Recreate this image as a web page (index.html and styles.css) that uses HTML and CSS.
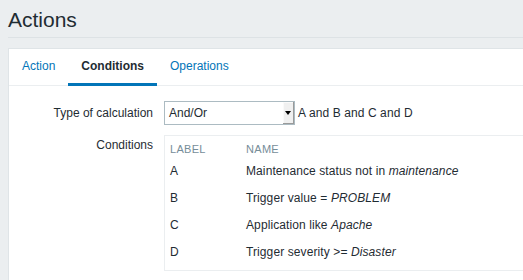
FILE: index.html
```html
<!DOCTYPE html>
<html>
<head>
<meta charset="utf-8">
<link rel="stylesheet" href="styles.css">
</head>
<body>
<header class="page-header">
  <h1 class="title">Actions</h1>
</header>
<main class="panel">
  <ul class="tabs">
    <li class="tab"><a href="#">Action</a></li>
    <li class="tab active"><a href="#">Conditions</a></li>
    <li class="tab"><a href="#">Operations</a></li>
  </ul>
  <div class="form">
    <div class="row">
      <label class="label label-calc">Type of calculation</label>
      <div class="field field-calc">
        <div class="select">
          <span class="select-text">And/Or</span>
          <span class="select-btn"><span class="caret"></span></span>
        </div>
        <span class="formula">A and B and C and D</span>
      </div>
    </div>
    <div class="row">
      <label class="label label-cond">Conditions</label>
      <div class="field field-cond">
        <div class="cond-box">
          <div class="cond-head">
            <span class="col-label">Label</span>
            <span class="col-name">Name</span>
          </div>
          <div class="cond-row"><span class="col-label">A</span><span class="col-name">Maintenance status not in <em>maintenance</em></span></div>
          <div class="cond-row"><span class="col-label">B</span><span class="col-name">Trigger value = <em>PROBLEM</em></span></div>
          <div class="cond-row"><span class="col-label">C</span><span class="col-name">Application like <em>Apache</em></span></div>
          <div class="cond-row"><span class="col-label">D</span><span class="col-name">Trigger severity &gt;= <em>Disaster</em></span></div>
        </div>
      </div>
    </div>
  </div>
</main>
</body>
</html>
```

FILE: styles.css
```css
html, body {
  margin: 0;
  padding: 0;
}
body {
  background: #ebeef0;
  font-family: "Liberation Sans", Arial, sans-serif;
  font-size: 12px;
  color: #1f2c33;
  overflow: hidden;
  height: 280px;
  display: flex;
  flex-direction: column;
}
.page-header {
  margin: 0 0 0 8px;
  padding: 8px 0 5px 0;
  border-bottom: 1px solid #dde2e5;
}
.title {
  margin: 0;
  font-size: 21px;
  font-weight: normal;
  line-height: 24px;
  color: #1f2c33;
}
.panel {
  flex: 1;
  margin: 10px 0 0 8px;
  background: #fff;
  border: 1px solid #dfe4e7;
  border-right: none;
  border-bottom: none;
}
.tabs {
  list-style: none;
  margin: 0;
  padding: 0;
  display: flex;
  border-bottom: 1px solid #ebeef0;
}
.tab {
  height: 34px;
  line-height: 34px;
  padding: 0 13px;
  border-bottom: 3px solid transparent;
  margin-bottom: -1px;
}
.tab a {
  color: #0275b8;
  text-decoration: none;
}
.tab.active {
  border-bottom-color: #0275b8;
}
.tab.active a {
  color: #1f2c33;
  font-weight: bold;
}
.form {
  padding-top: 15px;
  display: flex;
  flex-direction: column;
  gap: 10px;
}
.row {
  display: flex;
  gap: 11px;
}
.label {
  width: 144px;
  text-align: right;
  flex: none;
}
.label-calc {
  line-height: 24px;
}
.label-cond {
  line-height: 14px;
  padding-top: 3px;
}
.field-calc {
  display: flex;
  align-items: center;
  gap: 3px;
}
.field-cond {
  flex: 1;
}
.select {
  box-sizing: border-box;
  width: 131px;
  height: 24px;
  border: 1px solid #acbbc2;
  background: #fff;
  display: flex;
}
.select-text {
  flex: 1;
  line-height: 22px;
  padding-left: 4px;
}
.select-btn {
  width: 11px;
  background: #f0f0f0;
  box-shadow: inset -1px -1px 0 #9a9a9a, inset 1px 1px 0 #fafafa;
  display: flex;
  align-items: center;
  justify-content: center;
}
.caret {
  width: 0;
  height: 0;
  border-left: 3px solid transparent;
  border-right: 3px solid transparent;
  border-top: 4px solid #000;
  margin-right: 1px;
}
.formula {
  line-height: 24px;
  letter-spacing: 0.1px;
}
.cond-box {
  box-sizing: border-box;
  border: 1px solid #ebeef0;
  border-right: none;
  padding: 0 0 4px 5px;
}
.cond-head {
  display: flex;
  padding: 6px 0 2px 0;
  line-height: 14px;
  font-size: 11px;
  text-transform: uppercase;
  letter-spacing: 0.3px;
  color: #768d99;
}
.cond-row {
  display: flex;
  line-height: 27px;
  letter-spacing: 0.1px;
}
.col-label {
  width: 76px;
  flex: none;
}
.col-name em {
  font-style: italic;
}
```
